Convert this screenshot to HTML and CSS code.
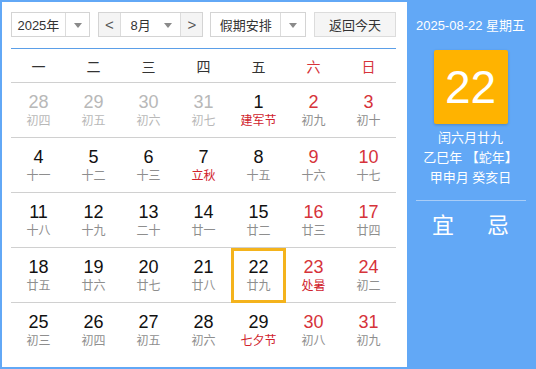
FILE: index.html
```html
<!DOCTYPE html>
<html lang="zh">
<head>
  <meta charset="UTF-8">
  <title>万年历</title>
  <link rel="stylesheet" href="styles.css">
</head>
<body>

  <div class="calendar">
    <div class="main">
      <div class="toolbar">
        <div class="select year">
          <span class="label">2025年</span>
          <span class="arrow"></span>
        </div>
        <div class="month-group">
          <span class="nav">&lt;</span>
          <div class="select month">
            <span class="label">8月</span>
            <span class="arrow"></span>
          </div>
          <span class="nav next">&gt;</span>
        </div>
        <div class="select holiday">
          <span class="label">假期安排</span>
          <span class="arrow"></span>
        </div>
        <button class="today">返回今天</button>
      </div>

      <div class="week-head">
        <span>一</span><span>二</span><span>三</span><span>四</span><span>五</span>
        <span class="weekend">六</span><span class="weekend">日</span>
      </div>

      <div id="days" class="days"></div>
    </div>

    <div class="side">
      <div class="side-date">2025-08-22 星期五</div>
      <div class="big-day">22</div>
      <div class="lunar-info">
        <p>闰六月廿九</p>
        <p>乙巳年 【蛇年】</p>
        <p>甲申月 癸亥日</p>
      </div>
      <div class="yiji">
        <span>宜</span>
        <span>忌</span>
      </div>
    </div>
  </div>

  <script>
    // [日, 农历, 类型]  other = 上月, fest = 节日/节气
    const dias = [
      ['28', '初四', 'other'], ['29', '初五', 'other'], ['30', '初六', 'other'], ['31', '初七', 'other'],
      ['1', '建军节', 'fest'], ['2', '初九'], ['3', '初十'],
      ['4', '十一'], ['5', '十二'], ['6', '十三'], ['7', '立秋', 'fest'], ['8', '十五'], ['9', '十六'], ['10', '十七'],
      ['11', '十八'], ['12', '十九'], ['13', '二十'], ['14', '廿一'], ['15', '廿二'], ['16', '廿三'], ['17', '廿四'],
      ['18', '廿五'], ['19', '廿六'], ['20', '廿七'], ['21', '廿八'], ['22', '廿九', 'today'], ['23', '处暑', 'fest'], ['24', '初二'],
      ['25', '初三'], ['26', '初四'], ['27', '初五'], ['28', '初六'], ['29', '七夕节', 'fest'], ['30', '初八'], ['31', '初九']
    ];

    const contenedor = document.getElementById('days');

    dias.forEach((d, i) => {
      const celda = document.createElement('div');
      celda.className = 'day';
      if (d[2] === 'other') celda.classList.add('other');
      if (d[2] === 'fest') celda.classList.add('fest');
      if (d[2] === 'today') celda.classList.add('today-cell');
      if (i % 7 >= 5 && d[2] !== 'other') celda.classList.add('weekend');
      celda.innerHTML = `<span class="num">${d[0]}</span><span class="lunar">${d[1]}</span>`;
      contenedor.appendChild(celda);
    });
  </script>

</body>
</html>
```

FILE: styles.css
```css
* {
  margin: 0;
  padding: 0;
  box-sizing: border-box;
}

body {
  font-family: 'Liberation Sans', 'Noto Sans CJK SC', sans-serif;
  background-color: #fff;
  color: #333;
}

.calendar {
  width: 536px;
  height: 369px;
  border: 2px solid #62a8f6;
  display: flex;
}

.main {
  width: 405px;
  padding: 10px 11px 0 9px;
  background-color: #fff;
}

/* barra superior */
.toolbar {
  display: flex;
  height: 25px;
  font-size: 13px;
  margin-bottom: 11px;
}

.select {
  display: flex;
  align-items: center;
  border: 1px solid #d4d4d4;
  background-color: #fff;
}

.select .label {
  flex: 1;
  text-align: center;
  color: #333;
}

.select .arrow {
  width: 24px;
  height: 100%;
  border-left: 1px solid #dcdcdc;
  position: relative;
}

.select .arrow::after {
  content: '';
  position: absolute;
  top: 10px;
  left: 8px;
  border-left: 4px solid transparent;
  border-right: 4px solid transparent;
  border-top: 5px solid #8a8a8a;
}

.year {
  width: 79px;
}

.month-group {
  display: flex;
  margin-left: 8px;
  width: 106px;
  border: 1px solid #d4d4d4;
}

.month-group .nav {
  width: 21px;
  display: flex;
  align-items: center;
  justify-content: center;
  background-color: #f4f4f4;
  color: #555;
  font-size: 15px;
}

.month-group .select {
  flex: 1;
  border: none;
  border-left: 1px solid #dcdcdc;
  border-right: 1px solid #dcdcdc;
}

.month-group .select .arrow {
  border-left: none;
  width: 20px;
}

.month-group .select .arrow::after {
  left: 4px;
}

.holiday {
  width: 96px;
  margin-left: 7px;
}

.holiday .arrow {
  width: 25px;
}

.today {
  width: 82px;
  margin-left: 8px;
  border: 1px solid #dcdcdc;
  background-color: #f5f5f5;
  font-family: inherit;
  font-size: 13px;
  color: #333;
}

/* cabecera semana */
.week-head {
  display: grid;
  grid-template-columns: repeat(7, 55px);
  height: 35px;
  border-top: 1px solid #5b9fe8;
  border-bottom: 1px solid #d0d0d0;
  align-items: center;
  font-size: 14px;
  color: #333;
}

.week-head span {
  text-align: center;
}

.week-head .weekend {
  color: #d6333a;
}

/* dias */
.days {
  display: grid;
  grid-template-columns: repeat(7, 55px);
  grid-auto-rows: 55px;
}

.day {
  display: flex;
  flex-direction: column;
  align-items: center;
  padding-top: 8px;
  border-bottom: 1px solid #d0d0d0;
}

.day:nth-child(n+29) {
  border-bottom: none;
}

.num {
  font-size: 18px;
  line-height: 22px;
  color: #111;
}

.lunar {
  font-size: 12px;
  line-height: 17px;
  color: #8e8e8e;
}

.day.other .num,
.day.other .lunar {
  color: #b8b8b8;
}

.day.weekend .num {
  color: #d6333a;
}

.day.fest .lunar {
  color: #d0222c;
}

.today-cell {
  box-shadow: inset 0 0 0 3px #f4b31c;
  border-bottom: none;
}

/* panel lateral */
.side {
  flex: 1;
  background-color: #62a8f6;
  color: #fff;
  display: flex;
  flex-direction: column;
  align-items: center;
}

.side-date {
  font-size: 13px;
  margin-top: 14px;
  line-height: 20px;
}

.big-day {
  width: 74px;
  height: 74px;
  margin-top: 14px;
  background-color: #ffb300;
  border-radius: 2px;
  box-shadow: 0 1px 3px rgba(0, 0, 0, 0.2);
  font-size: 46px;
  line-height: 74px;
  text-align: center;
}

.lunar-info {
  margin-top: 4px;
  font-size: 13px;
  line-height: 20px;
  text-align: center;
}

.yiji {
  width: 110px;
  margin-top: 12px;
  padding-top: 10px;
  border-top: 1px solid #a9cdf7;
  display: flex;
  justify-content: space-around;
  font-size: 22px;
  line-height: 30px;
}
```
